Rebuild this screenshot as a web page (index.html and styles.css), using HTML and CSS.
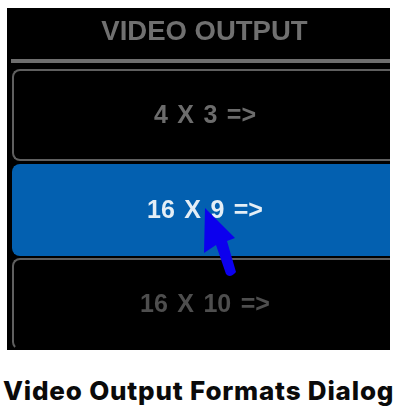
FILE: index.html
```html
<!DOCTYPE html>
<html lang="en">
<head>
<meta charset="utf-8">
<title>Video Output Formats Dialog</title>
<link rel="stylesheet" href="styles.css">
</head>
<body>
<figure class="figure">
  <div class="screen">
    <div class="heading">VIDEO OUTPUT</div>
    <div class="rule"></div>
    <div class="options">
      <div class="option">4 X 3 =&gt;</div>
      <div class="option option-active">16 X 9 =&gt;</div>
      <div class="option option-last">16 X 10 =&gt;</div>
    </div>
    <svg class="cursor" width="40" height="80" viewBox="0 0 40 80" aria-hidden="true">
      <path d="M4 2 L3 47 L15 39 L25 68 Q29 73 35 66 L26 35 L34 32 Z" fill="#0c00ee"/>
    </svg>
  </div>
  <figcaption class="caption">Video Output Formats Dialog</figcaption>
</figure>
</body>
</html>
```
FILE: styles.css
```css
html, body {
  margin: 0;
  background: #fff;
}
.figure {
  margin: 0;
  width: 405px;
  height: 414px;
  overflow: hidden;
  padding-top: 8px;
  box-sizing: border-box;
}
.screen {
  position: relative;
  margin-left: 7px;
  width: 383px;
  height: 342px;
  background: #000;
  overflow: hidden;
  font-family: "Liberation Sans", Arial, sans-serif;
  font-weight: 700;
  color: #6f6f6f;
  filter: blur(0.5px);
}
.heading {
  height: 51px;
  padding-top: 7px;
  padding-left: 12px;
  box-sizing: border-box;
  text-align: center;
  font-size: 27.5px;
  line-height: 32px;
  color: #707070;
}
.rule {
  height: 4px;
  margin-left: 4px;
  background: #6e6e6e;
}
.options {
  display: flex;
  flex-direction: column;
  padding-top: 6px;
  padding-left: 5px;
}
.option {
  height: 92px;
  box-sizing: border-box;
  border: 2px solid #5f5f5f;
  border-right: 0;
  border-radius: 8px 0 0 8px;
  display: flex;
  align-items: center;
  justify-content: center;
  padding-left: 6px;
  padding-bottom: 2px;
  font-size: 25px;
  word-spacing: 2.5px;
  white-space: pre;
  color: #6c6c6c;
}
.option-active {
  margin-top: 3px;
  background: #0360b0;
  border-color: #0360b0;
  color: #e4eef6;
}
.option-last {
  margin-top: 2px;
  color: #4e4e4e;
  border-bottom-color: transparent;
}
.cursor {
  position: absolute;
  left: 194px;
  top: 198px;
}
.caption {
  margin: 26px 0 0 3px;
  font-family: Inter, "Liberation Sans", sans-serif;
  font-weight: 800;
  font-size: 26px;
  letter-spacing: 0.8px;
  line-height: 30px;
  color: #0a0a0a;
  white-space: nowrap;
}
```
